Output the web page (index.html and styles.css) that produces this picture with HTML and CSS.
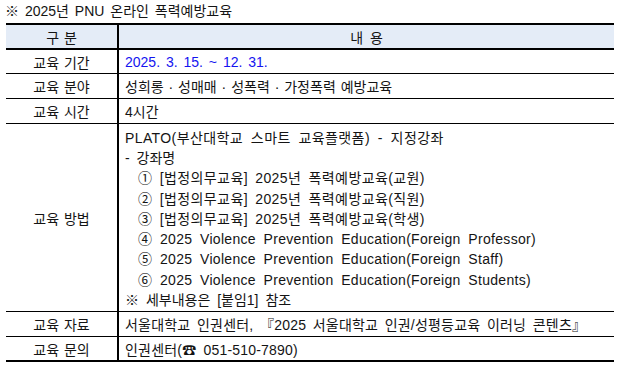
FILE: index.html
```html
<!DOCTYPE html>
<html lang="ko">
<head>
<meta charset="utf-8">
<link rel="stylesheet" href="styles.css">
</head>
<body>
<div class="page">
  <p class="title">※ 2025년 PNU 온라인 폭력예방교육</p>
  <table class="info">
    <thead>
      <tr class="head-row">
        <th class="label">구 분</th>
        <th class="content-head">내 용</th>
      </tr>
    </thead>
    <tbody>
      <tr class="r23">
        <td class="label">교육 기간</td>
        <td class="content date">2025. 3. 15. ~ 12. 31.</td>
      </tr>
      <tr class="r24">
        <td class="label">교육 분야</td>
        <td class="content tight">성희롱 · 성매매 · 성폭력 · 가정폭력 예방교육</td>
      </tr>
      <tr class="r24">
        <td class="label">교육 시간</td>
        <td class="content">4시간</td>
      </tr>
      <tr class="method">
        <td class="label">교육 방법</td>
        <td class="content">
          <div class="lines">
            <div class="plato">PLATO(부산대학교 스마트 교육플랫폼) - 지정강좌</div>
            <div>- 강좌명</div>
            <div class="item ko">① [법정의무교육] 2025년 폭력예방교육(교원)</div>
            <div class="item ko">② [법정의무교육] 2025년 폭력예방교육(직원)</div>
            <div class="item ko">③ [법정의무교육] 2025년 폭력예방교육(학생)</div>
            <div class="item en">④ 2025 Violence Prevention Education(Foreign Professor)</div>
            <div class="item en">⑤ 2025 Violence Prevention Education(Foreign Staff)</div>
            <div class="item en">⑥ 2025 Violence Prevention Education(Foreign Students)</div>
            <div>※ 세부내용은 [붙임1] 참조</div>
          </div>
        </td>
      </tr>
      <tr class="r24">
        <td class="label">교육 자료</td>
        <td class="content wide">서울대학교 인권센터, 『2025 서울대학교 인권/성평등교육 이러닝 콘텐츠』</td>
      </tr>
      <tr class="r23 last">
        <td class="label">교육 문의</td>
        <td class="content contact">인권센터(☎ 051-510-7890)</td>
      </tr>
    </tbody>
  </table>
</div>
</body>
</html>
```

FILE: styles.css
```css
html, body {
  margin: 0;
  padding: 0;
  background: #ffffff;
}
body {
  font-family: "Liberation Sans", "Noto Sans CJK KR", sans-serif;
  color: #141414;
}
.page {
  padding: 0 4px 0 6px;
}
.title {
  margin: 0;
  height: 23px;
  line-height: 22px;
  font-size: 14px;
  margin-left: -1px;
  word-spacing: 2px;
}
.info {
  width: 608px;
  border-collapse: separate;
  border-spacing: 0;
  font-size: 14px;
  word-spacing: 3px;
}
.info th, .info td {
  padding: 0;
  font-weight: normal;
}
.head-row th {
  background: #e4ecf7;
  height: 23px;
  border-top: 2px solid #000;
  border-bottom: 2px solid #000;
  text-align: center;
  vertical-align: middle;
}
.label {
  width: 111px;
  text-align: center;
  border-right: 2px solid #000;
  vertical-align: middle;
  word-spacing: 1px;
}
tbody td {
  border-bottom: 1px solid #000;
}
.r23 td { height: 23px; }
.r24 td { height: 24px; }
.last td { border-bottom: 2px solid #000; }
.content {
  padding-left: 6px !important;
  text-align: left;
  vertical-align: middle;
}
.date {
  color: #1414f0;
  word-spacing: 2px;
}
.tight {
  word-spacing: 1px;
}
.wide {
  word-spacing: 2.5px;
  letter-spacing: 0.2px;
}
.contact {
  letter-spacing: 0.2px;
}
.method td {
  height: 187px;
}
.lines {
  line-height: 20.25px;
  padding-top: 3px;
}
.plato {
  letter-spacing: 0.4px;
  word-spacing: 3.5px;
}
.item {
  padding-left: 13px;
}
.item.ko {
  letter-spacing: 0.4px;
  word-spacing: 3px;
}
.item.en {
  letter-spacing: 0.3px;
  word-spacing: 3.5px;
}
```
